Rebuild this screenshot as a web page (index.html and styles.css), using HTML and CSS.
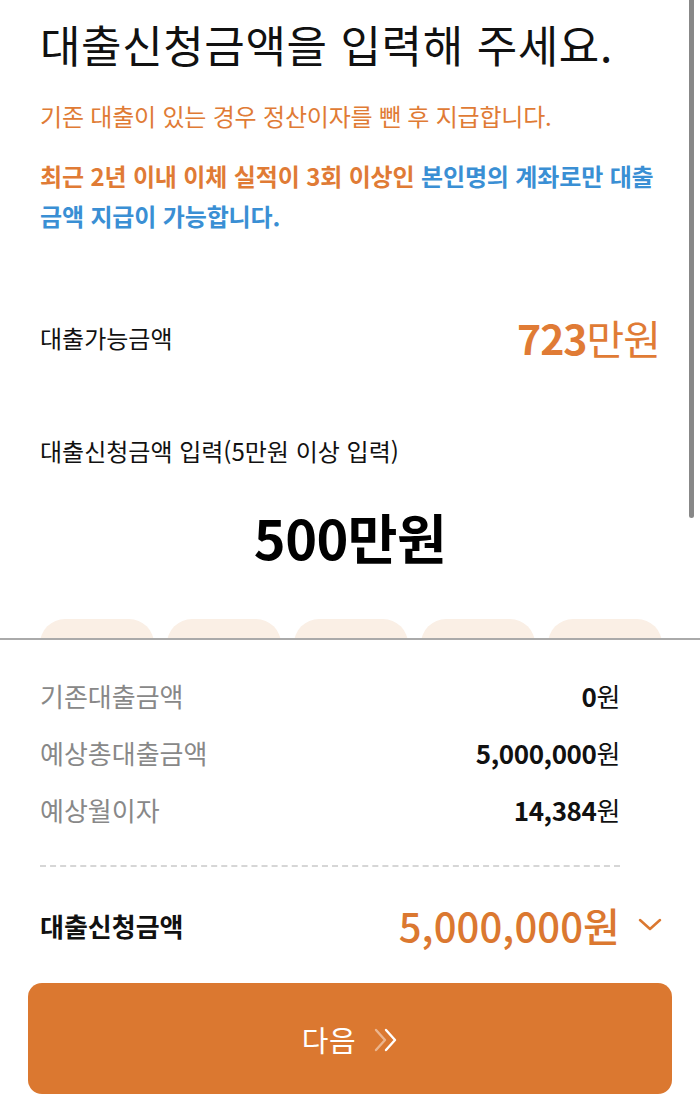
FILE: index.html
```html
<!DOCTYPE html>
<html lang="ko">
<head>
<meta charset="utf-8">
<link rel="stylesheet" href="styles.css">
</head>
<body>
<div class="screen">
  <main class="content">
    <h1 class="title">대출신청금액을 입력해 주세요.</h1>
    <p class="notice">기존 대출이 있는 경우 정산이자를 뺀 후 지급합니다.</p>
    <p class="rule"><span class="rule-orange">최근 2년 이내 이체 실적이 3회 이상인</span> <span class="rule-blue">본인명의 계좌로만 대출</span> <span class="rule-blue">금액 지급이 가능합니다.</span></p>

    <div class="limit-row">
      <span class="limit-label">대출가능금액</span>
      <span class="limit-value"><b>723</b>만원</span>
    </div>

    <p class="input-label">대출신청금액 입력(5만원 이상 입력)</p>
    <div class="input-amount">500만원</div>

    <div class="chips">
      <span class="chip"></span>
      <span class="chip"></span>
      <span class="chip"></span>
      <span class="chip"></span>
      <span class="chip"></span>
    </div>
    <div class="scrollbar"></div>
  </main>

  <section class="sheet">
    <div class="summary">
      <div class="sum-row"><span class="sum-label">기존대출금액</span><span class="sum-value"><b>0</b>원</span></div>
      <div class="sum-row"><span class="sum-label">예상총대출금액</span><span class="sum-value"><b>5,000,000</b>원</span></div>
      <div class="sum-row"><span class="sum-label">예상월이자</span><span class="sum-value"><b>14,384</b>원</span></div>
    </div>
    <div class="total-row">
      <span class="total-label">대출신청금액</span>
      <span class="total-value">5,000,000원</span>
      <svg class="chev" width="24" height="14" viewBox="0 0 24 14"><path d="M2 2 L12 11 L22 2" fill="none" stroke="#db7830" stroke-width="2.5" stroke-linecap="round" stroke-linejoin="round"/></svg>
    </div>
    <button class="next"><span class="next-label">다음</span>
      <svg class="arrows" width="28" height="26" viewBox="0 0 28 26"><path d="M4 3 L13 13 L4 23" fill="none" stroke="rgba(255,255,255,0.45)" stroke-width="2.4" stroke-linecap="round" stroke-linejoin="round"/><path d="M14 3 L23 13 L14 23" fill="none" stroke="#fff" stroke-width="2.4" stroke-linecap="round" stroke-linejoin="round"/></svg>
    </button>
  </section>
</div>
</body>
</html>
```

FILE: styles.css
```css
* { box-sizing: border-box; }
html, body { margin: 0; padding: 0; background: #fff; }
body {
  font-family: "Noto Sans CJK KR", "Noto Sans", sans-serif;
  color: #111;
}
.screen {
  width: 700px;
  height: 1113px;
  display: flex;
  flex-direction: column;
  overflow: hidden;
}
.content {
  position: relative;
  height: 638px;
  flex: 0 0 638px;
  overflow: hidden;
  padding: 14px 40px 0 40px;
}
.title {
  margin: 0;
  font-size: 44px;
  font-weight: 400;
  line-height: 60px;
  letter-spacing: 0.6px;
  color: #111;
}
.notice {
  margin: 27px 0 0;
  font-size: 24px;
  line-height: 30px;
  color: #e07b35;
  letter-spacing: -0.2px;
}
.rule {
  margin: 25px 0 0;
  font-size: 24px;
  line-height: 40px;
  font-weight: 700;
  letter-spacing: -0.15px;
}
.rule-orange { color: #e07b35; }
.rule-blue { color: #3a8fd4; }
.limit-row {
  margin-top: 73px;
  display: flex;
  justify-content: space-between;
  align-items: center;
  height: 56px;
}
.limit-label { font-size: 24px; color: #111; }
.limit-value {
  font-size: 41px;
  color: #e07b35;
  letter-spacing: -1px;
  line-height: 56px;
}
.limit-value b { font-weight: 700; }
.input-label {
  margin: 71px 0 0;
  font-size: 24px;
  line-height: 30px;
  color: #111;
}
.input-amount {
  margin-top: 41px;
  text-align: center;
  font-size: 54px;
  font-weight: 700;
  line-height: 60px;
  letter-spacing: -0.5px;
  color: #000;
}
.chips {
  margin-top: 52px;
  display: flex;
  gap: 13px;
}
.chip {
  flex: 0 0 114px;
  height: 50px;
  border-radius: 25px;
  background: #faefe5;
}
.scrollbar {
  position: absolute;
  top: 0;
  right: 6px;
  width: 5px;
  height: 518px;
  border-radius: 0 0 3px 3px;
  background: #888;
}
.sheet {
  flex: 1;
  border-top: 2px solid #aaa;
  padding: 27px 28px 0 28px;
  display: flex;
  flex-direction: column;
}
.summary {
  border-bottom: 2px dashed #d6d6d6;
  margin: 0 52px 0 12px;
  padding: 0 0 27px 0;
}
.sum-row {
  display: flex;
  justify-content: space-between;
  align-items: center;
  height: 57px;
}
.sum-label { font-size: 26px; color: #888; }
.sum-value { font-size: 26px; color: #111; letter-spacing: -0.4px; }
.sum-value b { font-weight: 700; }
.total-row {
  margin: 0 10px 0 12px;
  display: flex;
  align-items: center;
  height: 116px;
}
.total-label { font-size: 26px; font-weight: 700; flex: 1; color: #111; }
.total-value {
  font-size: 40px;
  font-weight: 500;
  color: #db7830;
  letter-spacing: 0.1px;
}
.chev { margin-left: 18px; flex: 0 0 24px; }
.next {
  height: 111px;
  width: 644px;
  border: 0;
  border-radius: 14px;
  background: #db7830;
  color: #fff;
  font-family: inherit;
  font-size: 29px;
  display: flex;
  align-items: center;
  justify-content: center;
  gap: 16px;
  padding: 0 0 0 2px;
}
.next-label { letter-spacing: 0.5px; }
.arrows { margin-top: 2px; }
```
